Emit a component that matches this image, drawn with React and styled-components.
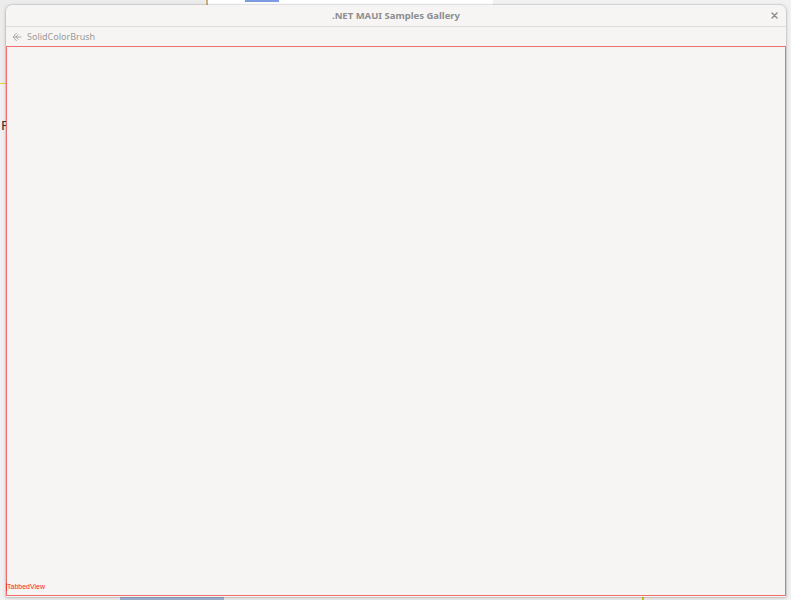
import React from "react";
import styled, { createGlobalStyle } from "styled-components";

const GlobalStyle = createGlobalStyle`
  html, body {
    margin: 0;
    padding: 0;
    width: 791px;
    height: 600px;
    overflow: hidden;
    font-family: "Noto Sans", "DejaVu Sans", sans-serif;
  }
`;

const Desktop = styled.div`
  position: relative;
  width: 791px;
  height: 600px;
  background: #f1f1f1;
  overflow: hidden;
`;

/* the app window that sits behind the gallery window */
const BehindApp = styled.div`
  display: flex;
  height: 100%;
`;

const Sidebar = styled.aside`
  width: 206px;
  flex: none;
  display: flex;
  flex-direction: column;
`;

const SidebarHeader = styled.div`
  height: 83px;
  background: #ececed;
  border-bottom: 1px solid #e9d23a;
`;

const SidebarItem = styled.span`
  padding: 34px 0 0 1px;
  font-family: "DejaVu Sans", sans-serif;
  font-size: 13px;
  color: #333;
`;

const SidebarButton = styled.div`
  margin: auto 0 0 120px;
  width: 104px;
  height: 4px;
  background: #a4b5d4;
`;

const ContentPane = styled.div`
  width: 287px;
  flex: none;
`;

const ContentHeader = styled.div`
  height: 6px;
  background: #ffffff;
  border-left: 2px solid #c8b27a;
  padding-left: 37px;
`;

const LinkFragment = styled.div`
  width: 34px;
  height: 2px;
  background: #7c9be0;
`;

const RestPane = styled.div`
  flex: 1;
  display: flex;
  padding-left: 149px;
`;

const BottomRule = styled.div`
  width: 2px;
  height: 6px;
  margin-top: auto;
  background: #e2c51c;
`;

const Window = styled.div`
  position: absolute;
  left: 6px;
  top: 5px;
  width: 780px;
  height: 592px;
  display: flex;
  flex-direction: column;
  background: #f6f5f4;
  border-radius: 6px 6px 0 0;
  box-shadow: 0 0 0 1px rgba(0, 0, 0, 0.08), 0 1px 4px rgba(0, 0, 0, 0.18);
`;

const TitleBar = styled.header`
  height: 21px;
  flex: none;
  display: grid;
  grid-template-columns: 1fr auto 1fr;
  align-items: center;
  border-bottom: 1px solid #dfdddb;
`;

const Title = styled.h1`
  grid-column: 2;
  margin: 0;
  font-family: "Noto Sans", sans-serif;
  font-size: 9.5px;
  font-weight: 700;
  color: #8c8e90;
`;

const CloseButton = styled.button`
  justify-self: end;
  margin-right: 6px;
  width: 11px;
  height: 11px;
  padding: 0;
  border: 0;
  background: none;
  display: flex;
  align-items: center;
  justify-content: center;
`;

const NavBar = styled.div`
  height: 19px;
  flex: none;
  display: flex;
  align-items: center;
  gap: 5px;
  padding-left: 6px;
`;

const BackIcon = styled.svg`
  width: 10px;
  height: 10px;
  flex: none;
`;

const PageTitle = styled.span`
  font-family: "Noto Sans", sans-serif;
  font-size: 9px;
  color: #9a9a9a;
`;

const TabbedView = styled.main`
  flex: 1;
  display: flex;
  flex-direction: column;
  align-items: flex-start;
  justify-content: flex-end;
  border: 1px solid #ef6e6e;
  margin-bottom: 1px;
`;

const DebugLabel = styled.span`
  font-family: "Liberation Sans", sans-serif;
  font-size: 7px;
  line-height: 8px;
  color: #ff2424;
  border-left: 1px solid #ff3030;
  margin: 0 0 4px -1px;
`;

const App = () => {
  return (
    <>
      <GlobalStyle />
      <Desktop>
        <BehindApp>
          <Sidebar>
            <SidebarHeader />
            <SidebarItem>F</SidebarItem>
            <SidebarButton />
          </Sidebar>
          <ContentPane>
            <ContentHeader>
              <LinkFragment />
            </ContentHeader>
          </ContentPane>
          <RestPane>
            <BottomRule />
          </RestPane>
        </BehindApp>

        <Window>
          <TitleBar>
            <Title>.NET MAUI Samples Gallery</Title>
            <CloseButton aria-label="Close">
              <svg width="7" height="7" viewBox="0 0 7 7">
                <path
                  d="M1 1 L6 6 M6 1 L1 6"
                  stroke="#8a8a8a"
                  strokeWidth="1.4"
                  strokeLinecap="round"
                />
              </svg>
            </CloseButton>
          </TitleBar>

          <NavBar>
            <BackIcon viewBox="0 0 10 10">
              <path
                d="M4.5 1.2 L1 5 L4.5 8.8 M2.4 5 H9 M6.2 2.6 L3.8 5 L6.2 7.4"
                fill="none"
                stroke="#a8a8a8"
                strokeWidth="1"
                strokeLinecap="round"
                strokeLinejoin="round"
              />
            </BackIcon>
            <PageTitle>SolidColorBrush</PageTitle>
          </NavBar>

          <TabbedView>
            <DebugLabel>TabbedView</DebugLabel>
          </TabbedView>
        </Window>
      </Desktop>
    </>
  );
};

export default App;
